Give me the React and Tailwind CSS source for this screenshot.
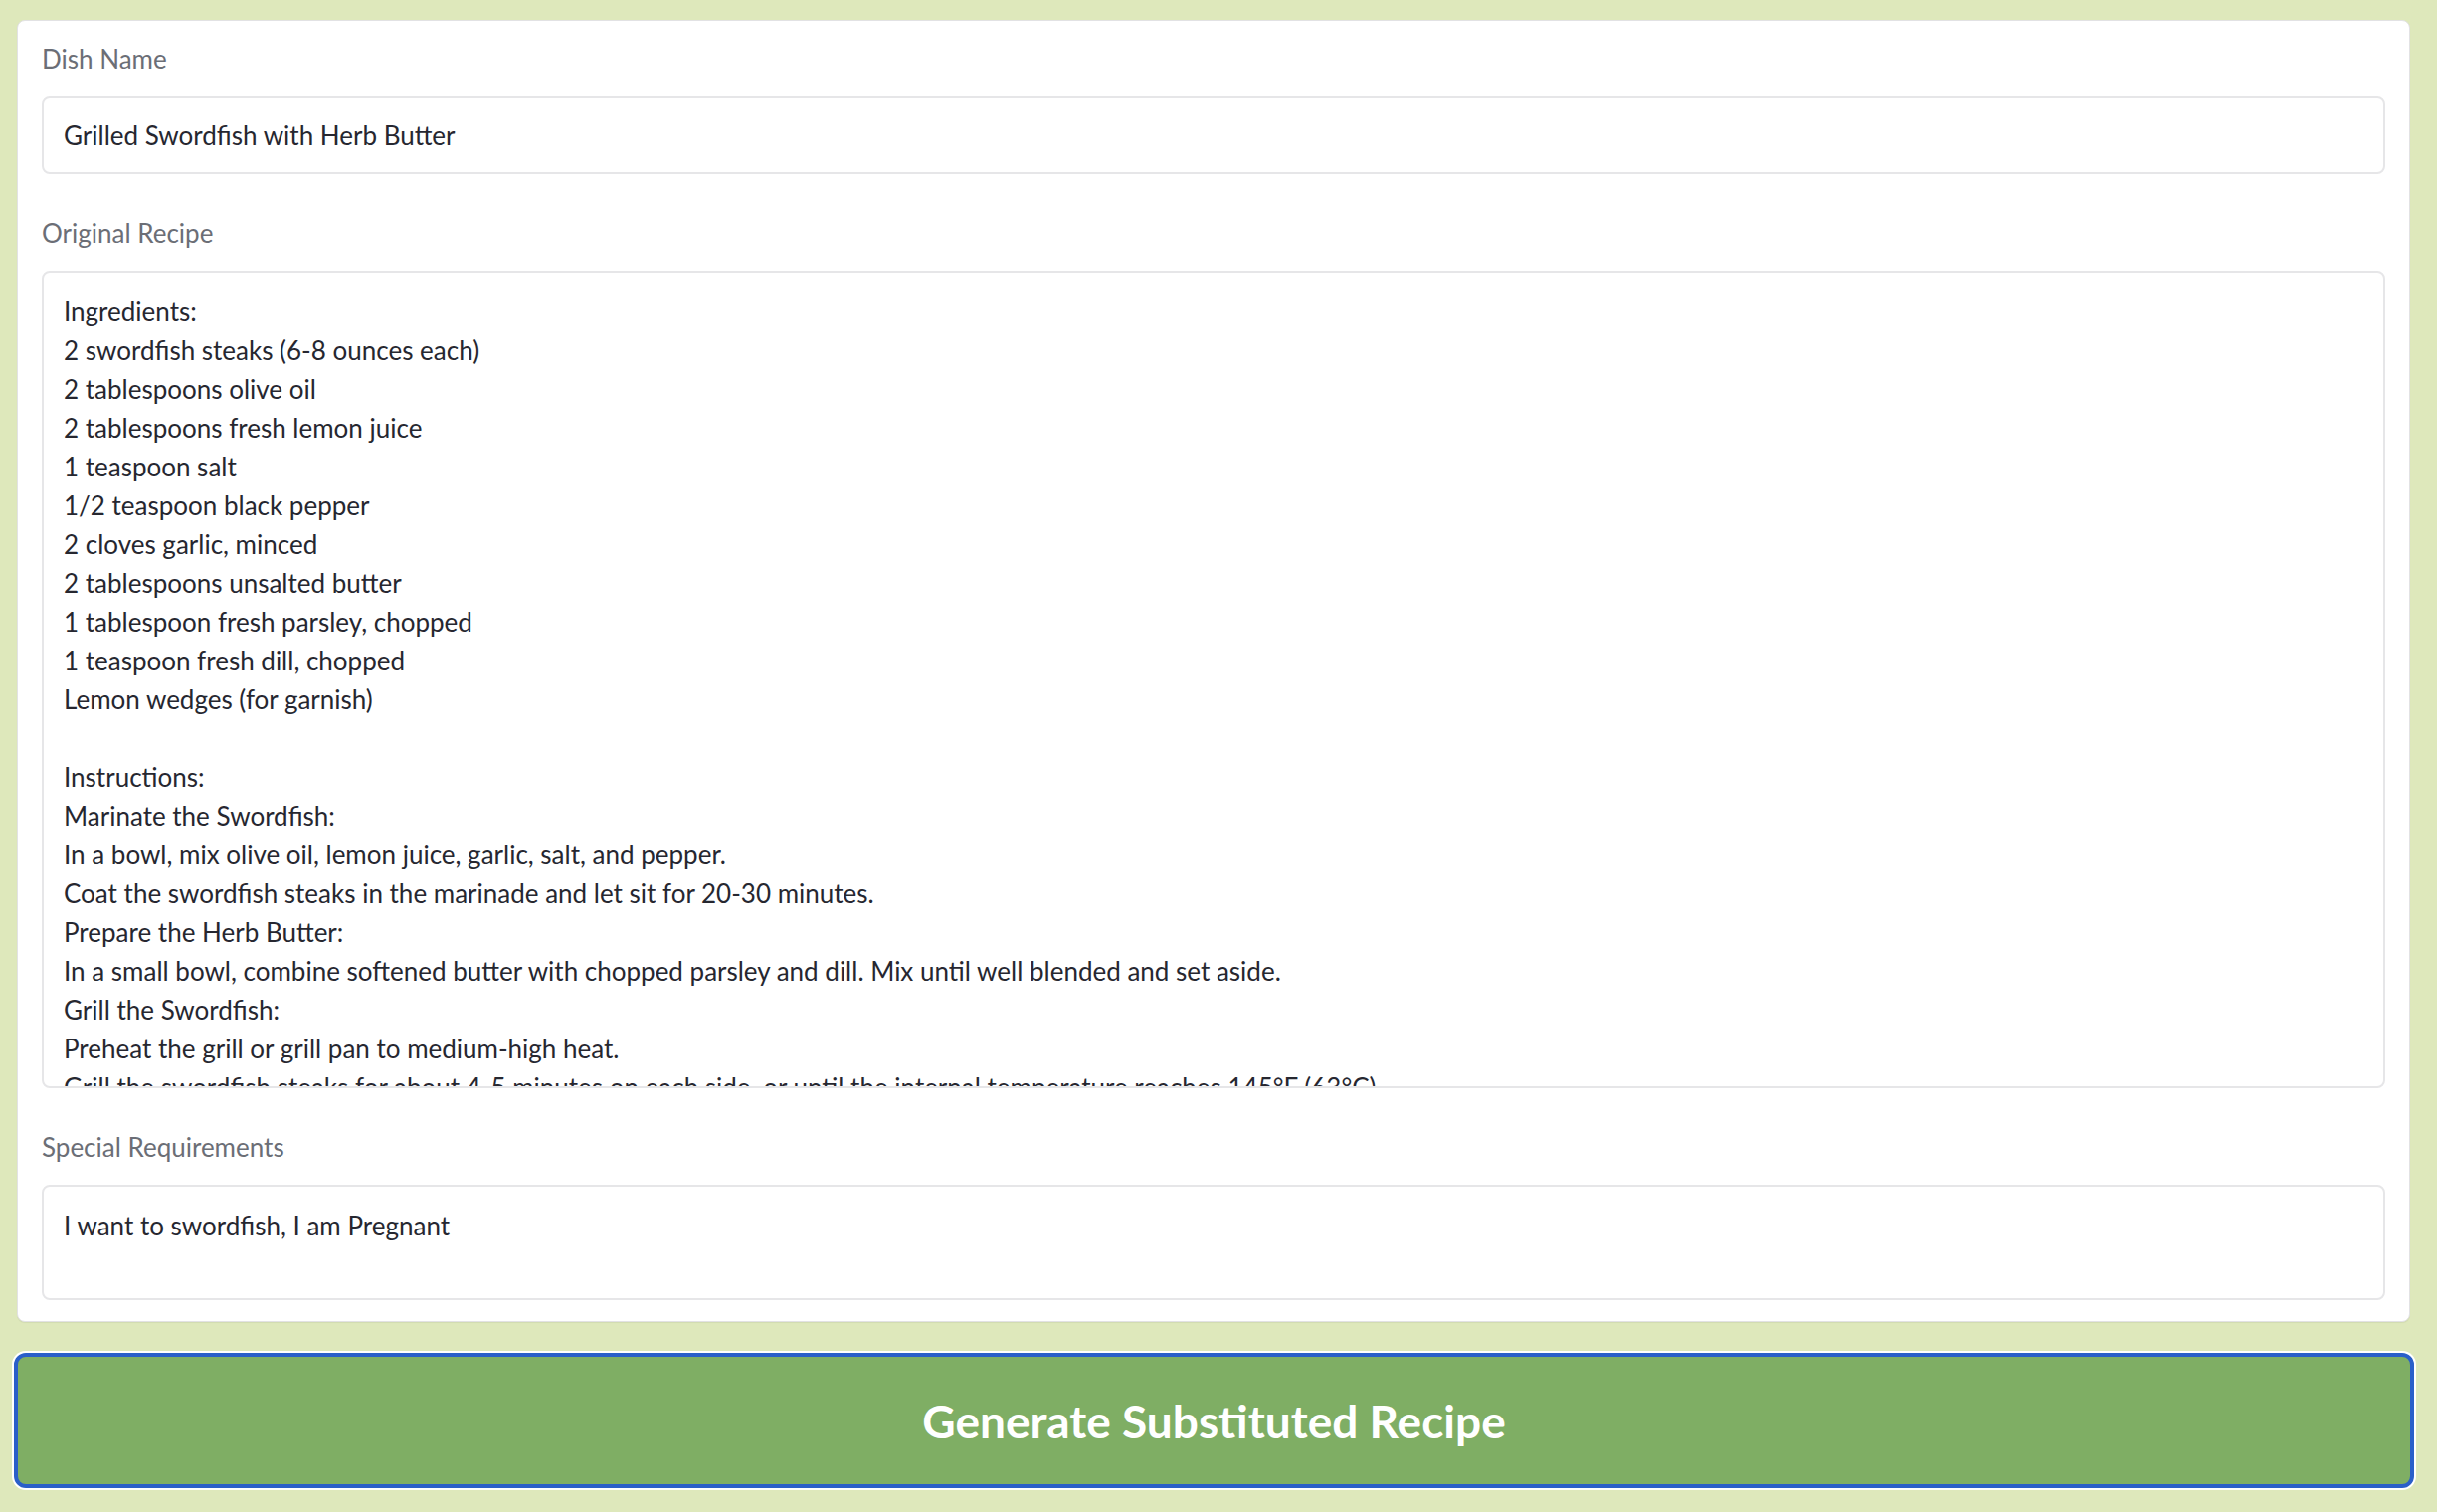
import { useState } from "react";

const recipe = `Ingredients:
2 swordfish steaks (6-8 ounces each)
2 tablespoons olive oil
2 tablespoons fresh lemon juice
1 teaspoon salt
1/2 teaspoon black pepper
2 cloves garlic, minced
2 tablespoons unsalted butter
1 tablespoon fresh parsley, chopped
1 teaspoon fresh dill, chopped
Lemon wedges (for garnish)

Instructions:
Marinate the Swordfish:
In a bowl, mix olive oil, lemon juice, garlic, salt, and pepper.
Coat the swordfish steaks in the marinade and let sit for 20-30 minutes.
Prepare the Herb Butter:
In a small bowl, combine softened butter with chopped parsley and dill. Mix until well blended and set aside.
Grill the Swordfish:
Preheat the grill or grill pan to medium-high heat.
Grill the swordfish steaks for about 4-5 minutes on each side, or until the internal temperature reaches 145°F (63°C).
Serve:
Top each steak with a dollop of herb butter and serve with lemon wedges.`;

function Field({ label, children }) {
  return (
    <div className="flex flex-col gap-[21px]">
      <label className="text-[26px] leading-[34px] text-[#6b6e76]">{label}</label>
      {children}
    </div>
  );
}

export default function App() {
  const [dish, setDish] = useState("Grilled Swordfish with Herb Butter");
  const [original, setOriginal] = useState(recipe);
  const [special, setSpecial] = useState("I want to swordfish, I am Pregnant");

  return (
    <div className="min-h-screen bg-[#dee8bb] pl-[14px] pr-[23px] pt-[20px] font-['Lato',sans-serif] text-[#262730]">
      <div className="ml-[3px] mr-[4px] flex flex-col gap-[42px] rounded-[8px] border border-[#e2e2e4] bg-white px-[24px] py-[21px] shadow-[0_1px_1px_rgba(0,0,0,0.06)]">
        <Field label="Dish Name">
          <input
            type="text"
            value={dish}
            onChange={(e) => setDish(e.target.value)}
            className="h-[78px] w-full rounded-[8px] border-2 border-[#e6e6e8] bg-white px-[20px] text-[26px] outline-none"
          />
        </Field>

        <Field label="Original Recipe">
          <textarea
            value={original}
            onChange={(e) => setOriginal(e.target.value)}
            className="h-[822px] w-full resize-none overflow-hidden rounded-[8px] border-2 border-[#e6e6e8] bg-white px-[20px] pt-[20px] pb-[18px] text-[26px] leading-[39px] outline-none"
          />
        </Field>

        <Field label="Special Requirements">
          <textarea
            value={special}
            onChange={(e) => setSpecial(e.target.value)}
            className="h-[116px] w-full resize-none overflow-hidden rounded-[8px] border-2 border-[#e6e6e8] bg-white px-[20px] pt-[20px] pb-[18px] text-[26px] leading-[39px] outline-none"
          />
        </Field>
      </div>

      <button className="mt-[31px] flex h-[136px] w-full items-center justify-center rounded-[12px] border-4 border-[#2a5fc9] bg-[#7fae64] text-[46px] font-bold text-white ring-2 ring-white">
        Generate Substituted Recipe
      </button>
    </div>
  );
}
